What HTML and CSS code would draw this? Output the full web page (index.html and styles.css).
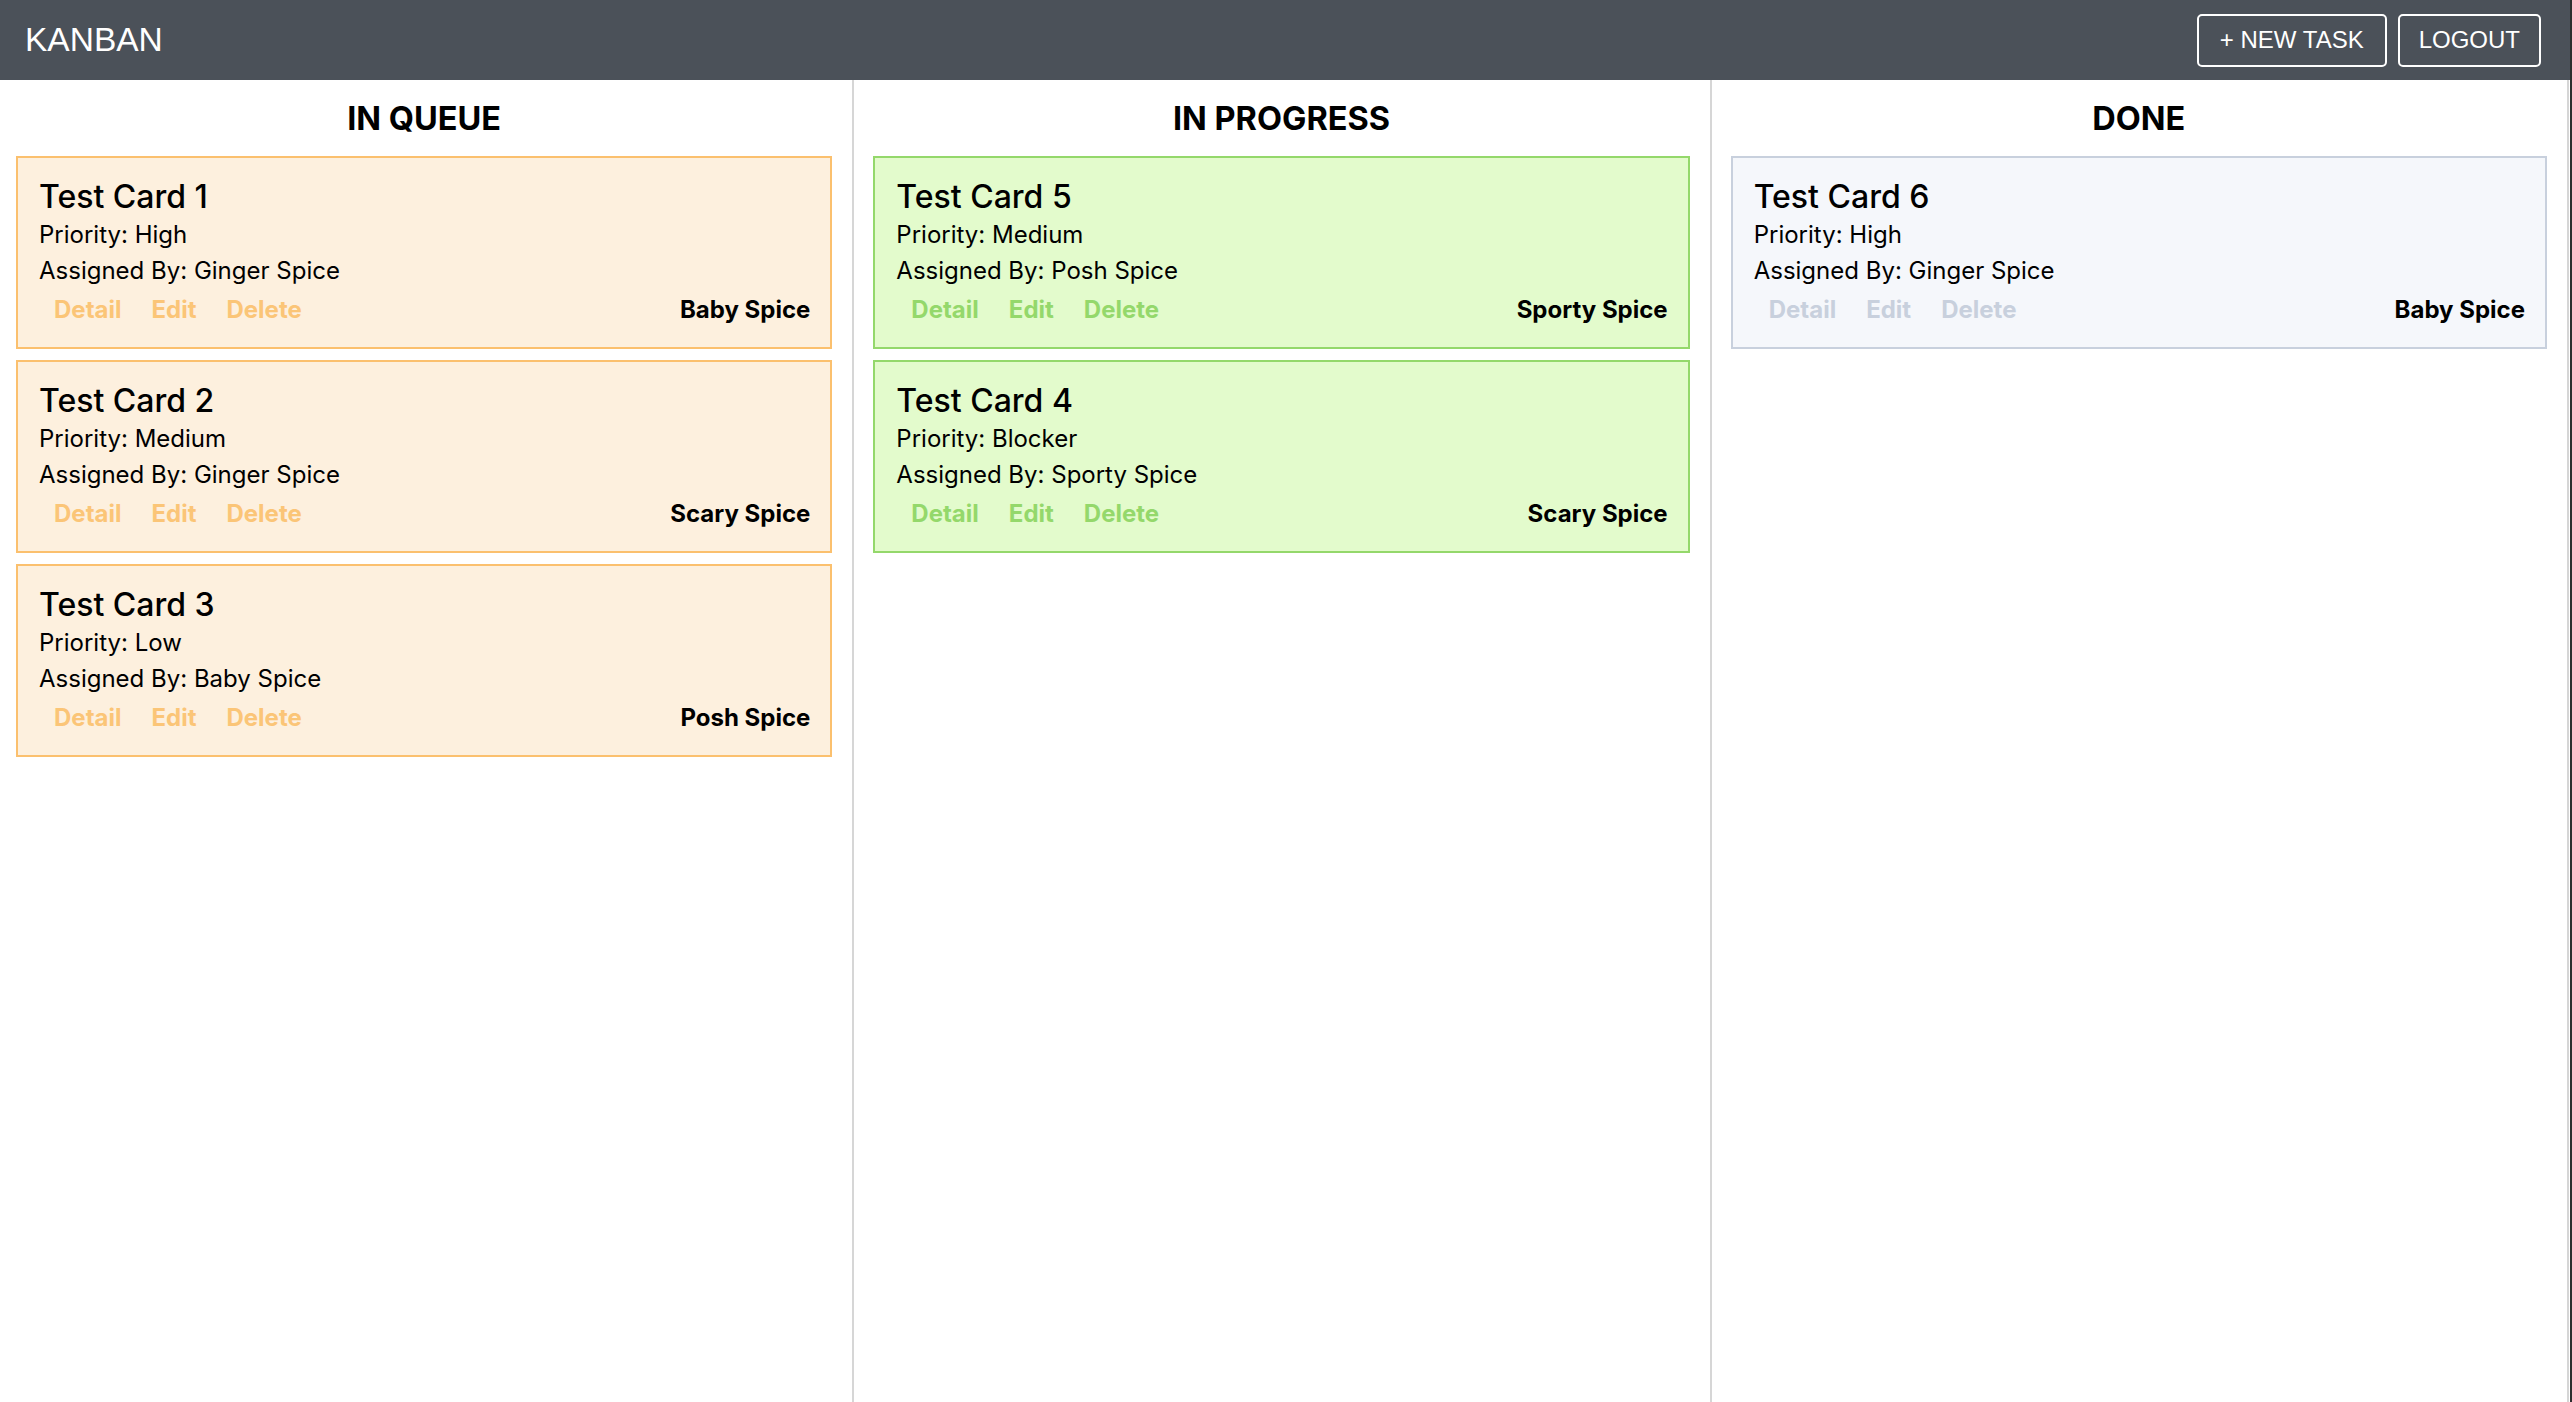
FILE: index.html
```html
<!DOCTYPE html>
<html lang="en">
<head>
<meta charset="utf-8">
<title>Kanban</title>
<link rel="stylesheet" href="styles.css">
</head>
<body>
<header class="topbar">
  <div class="brand">KANBAN</div>
  <nav class="actions">
    <button class="btn">+ NEW TASK</button>
    <button class="btn">LOGOUT</button>
  </nav>
</header>
<main class="board">
  <section class="column">
    <h2 class="column-title">IN QUEUE</h2>
    <div class="card card--queue">
      <h3 class="card-title">Test Card 1</h3>
      <p class="card-line">Priority: High</p>
      <p class="card-line">Assigned By: Ginger Spice</p>
      <div class="card-footer">
        <div class="card-links"><a>Detail</a><a>Edit</a><a>Delete</a></div>
        <span class="assignee">Baby Spice</span>
      </div>
    </div>
    <div class="card card--queue">
      <h3 class="card-title">Test Card 2</h3>
      <p class="card-line">Priority: Medium</p>
      <p class="card-line">Assigned By: Ginger Spice</p>
      <div class="card-footer">
        <div class="card-links"><a>Detail</a><a>Edit</a><a>Delete</a></div>
        <span class="assignee">Scary Spice</span>
      </div>
    </div>
    <div class="card card--queue">
      <h3 class="card-title">Test Card 3</h3>
      <p class="card-line">Priority: Low</p>
      <p class="card-line">Assigned By: Baby Spice</p>
      <div class="card-footer">
        <div class="card-links"><a>Detail</a><a>Edit</a><a>Delete</a></div>
        <span class="assignee">Posh Spice</span>
      </div>
    </div>
  </section>
  <section class="column">
    <h2 class="column-title">IN PROGRESS</h2>
    <div class="card card--progress">
      <h3 class="card-title">Test Card 5</h3>
      <p class="card-line">Priority: Medium</p>
      <p class="card-line">Assigned By: Posh Spice</p>
      <div class="card-footer">
        <div class="card-links"><a>Detail</a><a>Edit</a><a>Delete</a></div>
        <span class="assignee">Sporty Spice</span>
      </div>
    </div>
    <div class="card card--progress">
      <h3 class="card-title">Test Card 4</h3>
      <p class="card-line">Priority: Blocker</p>
      <p class="card-line">Assigned By: Sporty Spice</p>
      <div class="card-footer">
        <div class="card-links"><a>Detail</a><a>Edit</a><a>Delete</a></div>
        <span class="assignee">Scary Spice</span>
      </div>
    </div>
  </section>
  <section class="column">
    <h2 class="column-title">DONE</h2>
    <div class="card card--done">
      <h3 class="card-title">Test Card 6</h3>
      <p class="card-line">Priority: High</p>
      <p class="card-line">Assigned By: Ginger Spice</p>
      <div class="card-footer">
        <div class="card-links"><a>Detail</a><a>Edit</a><a>Delete</a></div>
        <span class="assignee">Baby Spice</span>
      </div>
    </div>
  </section>
</main>
</body>
</html>
```
FILE: styles.css
```css
* { box-sizing: border-box; }

html, body {
  margin: 0;
  height: 100%;
}

body {
  display: flex;
  flex-direction: column;
  background: #ffffff;
  font-family: Inter, "Noto Sans", sans-serif;
  color: #000;
  overflow: hidden;
}

/* dark window edge drawn over the right side */
body::after {
  content: "";
  position: fixed;
  top: 0;
  right: 0;
  width: 2px;
  height: 100%;
  background: #2e2e2e;
}

.topbar {
  flex: 0 0 80px;
  display: flex;
  align-items: center;
  justify-content: space-between;
  background: #4b5159;
  padding: 0 31px 0 25px;
}

.brand {
  font-family: "Liberation Sans", Arial, sans-serif;
  font-size: 33.5px;
  color: #ffffff;
}

.actions {
  display: flex;
  gap: 11px;
}

.btn {
  height: 53px;
  padding: 0 21px;
  background: transparent;
  border: 2px solid #ffffff;
  border-radius: 5px;
  color: #ffffff;
  font-family: "Liberation Sans", Arial, sans-serif;
  font-size: 24px;
}

.btn + .btn {
  padding: 0 19px;
}

.board {
  flex: 1;
  display: grid;
  grid-template-columns: repeat(3, 1fr);
}

.column {
  margin-right: 3px;
  border-right: 2px solid #d6d6d6;
  padding: 0 20px 0 16px;
}

.column-title {
  margin: 19px 0 17px;
  font-size: 32.5px;
  line-height: 40px;
  font-weight: 700;
  text-align: center;
}

.card {
  border: 2px solid;
  padding: 19px 20px 18px 21px;
  margin-bottom: 11px;
}

.card-title {
  margin: 0;
  font-size: 32px;
  line-height: 40px;
  font-weight: 500;
}

.card-line {
  margin: 0;
  font-size: 24px;
  line-height: 36px;
}

.card-footer {
  height: 40px;
  display: flex;
  align-items: center;
  justify-content: space-between;
}

.card-links {
  display: flex;
}

.card-links a {
  padding: 0 15px;
  font-size: 24px;
  font-weight: 700;
  cursor: pointer;
}

.assignee {
  font-size: 24px;
  font-weight: 700;
}

.card--queue { background: #fdf0de; border-color: #fbc06e; }
.card--queue .card-links a { color: #fbc577; }

.card--progress { background: #e3fbcc; border-color: #94d86b; }
.card--progress .card-links a { color: #94d86b; }

.card--done { background: #f5f7fb; border-color: #c8d0dd; }
.card--done .card-links a { color: #c8d0dd; }
```
